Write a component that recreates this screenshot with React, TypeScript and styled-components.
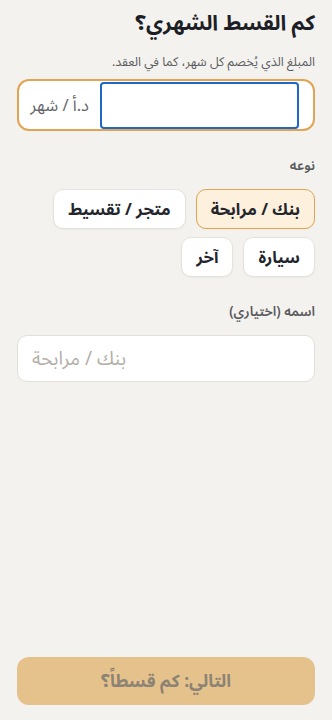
import React from 'react';
import styled, { createGlobalStyle } from 'styled-components';

const GlobalStyle = createGlobalStyle`
  html, body {
    margin: 0;
    padding: 0;
    background: #f4f2ee;
  }
  * { box-sizing: border-box; }
  body {
    font-family: "Noto Sans Arabic", "Noto Sans", "DejaVu Sans", sans-serif;
  }
`;

const Page = styled.div`
  direction: rtl;
  min-height: 100vh;
  display: flex;
  flex-direction: column;
  padding: 8px 17px 15px;
`;

const Title = styled.h1`
  margin: 0;
  font-size: 21px;
  font-weight: 700;
  color: #1d1f27;
  line-height: 30px;
`;

const Subtitle = styled.p`
  margin: 14px 0 0;
  font-size: 12.5px;
  color: #5b5d63;
  line-height: 20px;
`;

const AmountGroup = styled.div`
  margin-top: 7px;
  height: 52px;
  display: flex;
  align-items: center;
  background: #fff;
  border: 2px solid #e0a452;
  border-radius: 12px;
  padding: 0 14px 0 0;
`;

const AmountInput = styled.input`
  width: 199px;
  height: 47px;
  border: 2px solid #1f67c9;
  border-radius: 4px;
  outline: none;
  background: #fff;
  font: inherit;
  font-size: 16px;
  padding: 0 10px;
  direction: ltr;
`;

const Suffix = styled.span`
  padding: 0 11px;
  font-size: 16.5px;
  color: #66666a;
`;

const Label = styled.div<{ $top: number }>`
  margin-top: ${(p) => p.$top}px;
  font-size: 13.5px;
  font-weight: 600;
  color: #5a5a5e;
  line-height: 18px;
`;

const Chips = styled.div`
  margin-top: 14px;
  display: flex;
  flex-wrap: wrap;
  gap: 8px 10px;
`;

const Chip = styled.button<{ $active?: boolean }>`
  height: 40px;
  padding: 0 14px;
  border-radius: 10px;
  font: inherit;
  font-size: 16.5px;
  font-weight: 700;
  color: #23252d;
  background: ${(p) => (p.$active ? '#fdf0dc' : '#ffffff')};
  border: ${(p) => (p.$active ? '1.5px solid #e0a452' : '1px solid #e6e2db')};
  box-shadow: 0 1px 2px rgba(0, 0, 0, 0.04);
`;

const NameInput = styled.input`
  margin-top: 14px;
  width: 100%;
  height: 47px;
  border: 1px solid #e3dfd8;
  border-radius: 10px;
  background: #fff;
  outline: none;
  font: inherit;
  font-size: 19px;
  padding: 0 14px;
  direction: ltr;
  text-align: left;
  &::placeholder {
    color: #b3afa8;
  }
`;

const NextButton = styled.button`
  margin-top: auto;
  height: 48px;
  width: 100%;
  border: none;
  border-radius: 12px;
  background: #e5c28c;
  color: #8d8375;
  font: inherit;
  font-size: 17.5px;
  font-weight: 700;
`;

export default function App() {
  return (
    <>
      <GlobalStyle />
      <Page>
        <Title>كم القسط الشهري؟</Title>
        <Subtitle>المبلغ الذي يُخصم كل شهر، كما في العقد.</Subtitle>
        <AmountGroup>
          <AmountInput inputMode="numeric" />
          <Suffix>د.أ / شهر</Suffix>
        </AmountGroup>

        <Label $top={26}>نوعه</Label>
        <Chips>
          <Chip $active>بنك / مرابحة</Chip>
          <Chip>متجر / تقسيط</Chip>
          <Chip>سيارة</Chip>
          <Chip>آخر</Chip>
        </Chips>

        <Label $top={26}>اسمه (اختياري)</Label>
        <NameInput placeholder="بنك / مرابحة" />

        <NextButton disabled>التالي: كم قسطاً؟</NextButton>
      </Page>
    </>
  );
}
